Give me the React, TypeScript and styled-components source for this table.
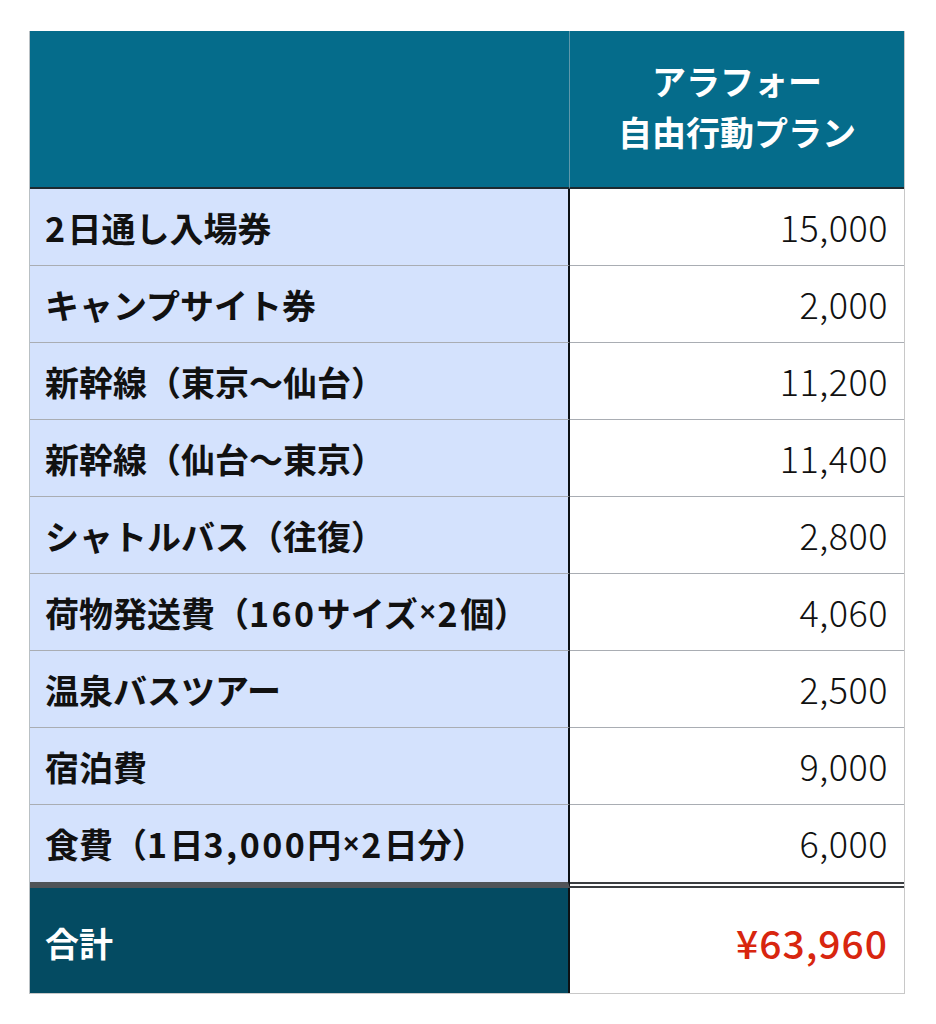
import styled, { createGlobalStyle } from "styled-components";

const GlobalStyle = createGlobalStyle`
  body {
    margin: 0;
    background: #ffffff;
    font-family: "Noto Sans CJK JP", "Noto Sans", sans-serif;
  }
`;

const Page = styled.div`
  padding: 31px 31px 0 29px;
`;

const Sheet = styled.div`
  display: grid;
  grid-template-columns: 540px 334px;
  border-left: 1px solid #b9c0c4;
  border-right: 1px solid #c8c8c8;
  border-bottom: 1px solid #c8c8c8;
  box-sizing: border-box;
  width: 876px;
`;

const HeadCell = styled.div<{ $divider?: boolean }>`
  height: 158px;
  box-sizing: border-box;
  background: #056c8b;
  border-bottom: 2px solid #1d2a30;
  border-right: ${(p) => (p.$divider ? "1px solid #5e98ab" : "none")};
  color: #ffffff;
  display: flex;
  align-items: center;
  justify-content: center;
  text-align: center;
  font-size: 34px;
  font-weight: 700;
  line-height: 51px;
  padding-bottom: 6px;
`;

const LabelCell = styled.div<{ $last?: boolean }>`
  height: ${(p) => (p.$last ? "83px" : "77px")};
  box-sizing: border-box;
  background: #d4e2fd;
  border-right: 2px solid #0d1114;
  border-bottom: ${(p) => (p.$last ? "6px solid #505458" : "1px solid #a9adb3")};
  display: flex;
  align-items: center;
  padding: 0 0 0 15px;
  font-size: 34px;
  font-weight: 700;
  color: #111111;
  white-space: nowrap;
`;

const Num = styled.span`
  letter-spacing: 2.5px;
`;

const Times = styled.span`
  font-family: "Liberation Sans", sans-serif;
  font-size: 0.8em;
  margin: 0 2px;
`;

const PriceCell = styled.div<{ $last?: boolean }>`
  height: ${(p) => (p.$last ? "83px" : "77px")};
  box-sizing: border-box;
  background: #ffffff;
  border-bottom: ${(p) => (p.$last ? "6px double #3a3d40" : "1px solid #a9adb3")};
  display: flex;
  align-items: center;
  justify-content: flex-end;
  padding: 0 16px 3px 0;
  font-size: 36px;
  font-weight: 300;
  letter-spacing: 0.5px;
  color: #111111;
`;

const TotalLabel = styled.div`
  height: 105px;
  box-sizing: border-box;
  background: #044b62;
  border-right: 2px solid #0d1114;
  display: flex;
  align-items: center;
  padding: 4px 0 0 15px;
  color: #ffffff;
  font-size: 34px;
  font-weight: 700;
`;

const TotalPrice = styled.div`
  height: 105px;
  box-sizing: border-box;
  background: #ffffff;
  display: flex;
  align-items: center;
  justify-content: flex-end;
  padding: 2px 16px 0 0;
  color: #d8260f;
  font-size: 39px;
  font-weight: 500;
  letter-spacing: 1px;
`;

const rows: { label: React.ReactNode; price: string }[] = [
  {
    label: (
      <>
        <Num>2</Num>日通し入場券
      </>
    ),
    price: "15,000",
  },
  { label: "キャンプサイト券", price: "2,000" },
  { label: "新幹線（東京〜仙台）", price: "11,200" },
  { label: "新幹線（仙台〜東京）", price: "11,400" },
  { label: "シャトルバス（往復）", price: "2,800" },
  {
    label: (
      <>
        荷物発送費（<Num>160</Num>サイズ<Times>×</Times>
        <Num>2</Num>個）
      </>
    ),
    price: "4,060",
  },
  { label: "温泉バスツアー", price: "2,500" },
  { label: "宿泊費", price: "9,000" },
  {
    label: (
      <>
        食費（<Num>1</Num>日<Num>3,000</Num>円<Times>×</Times>
        <Num>2</Num>日分）
      </>
    ),
    price: "6,000",
  },
];

export default function App() {
  return (
    <>
      <GlobalStyle />
      <Page>
        <Sheet>
          <HeadCell $divider />
          <HeadCell>
            アラフォー
            <br />
            自由行動プラン
          </HeadCell>
          {rows.map((row, i) => {
            const last = i === rows.length - 1;
            return [
              <LabelCell key={"l" + i} $last={last}>
                {row.label}
              </LabelCell>,
              <PriceCell key={"p" + i} $last={last}>
                {row.price}
              </PriceCell>,
            ];
          })}
          <TotalLabel>合計</TotalLabel>
          <TotalPrice>¥63,960</TotalPrice>
        </Sheet>
      </Page>
    </>
  );
}
